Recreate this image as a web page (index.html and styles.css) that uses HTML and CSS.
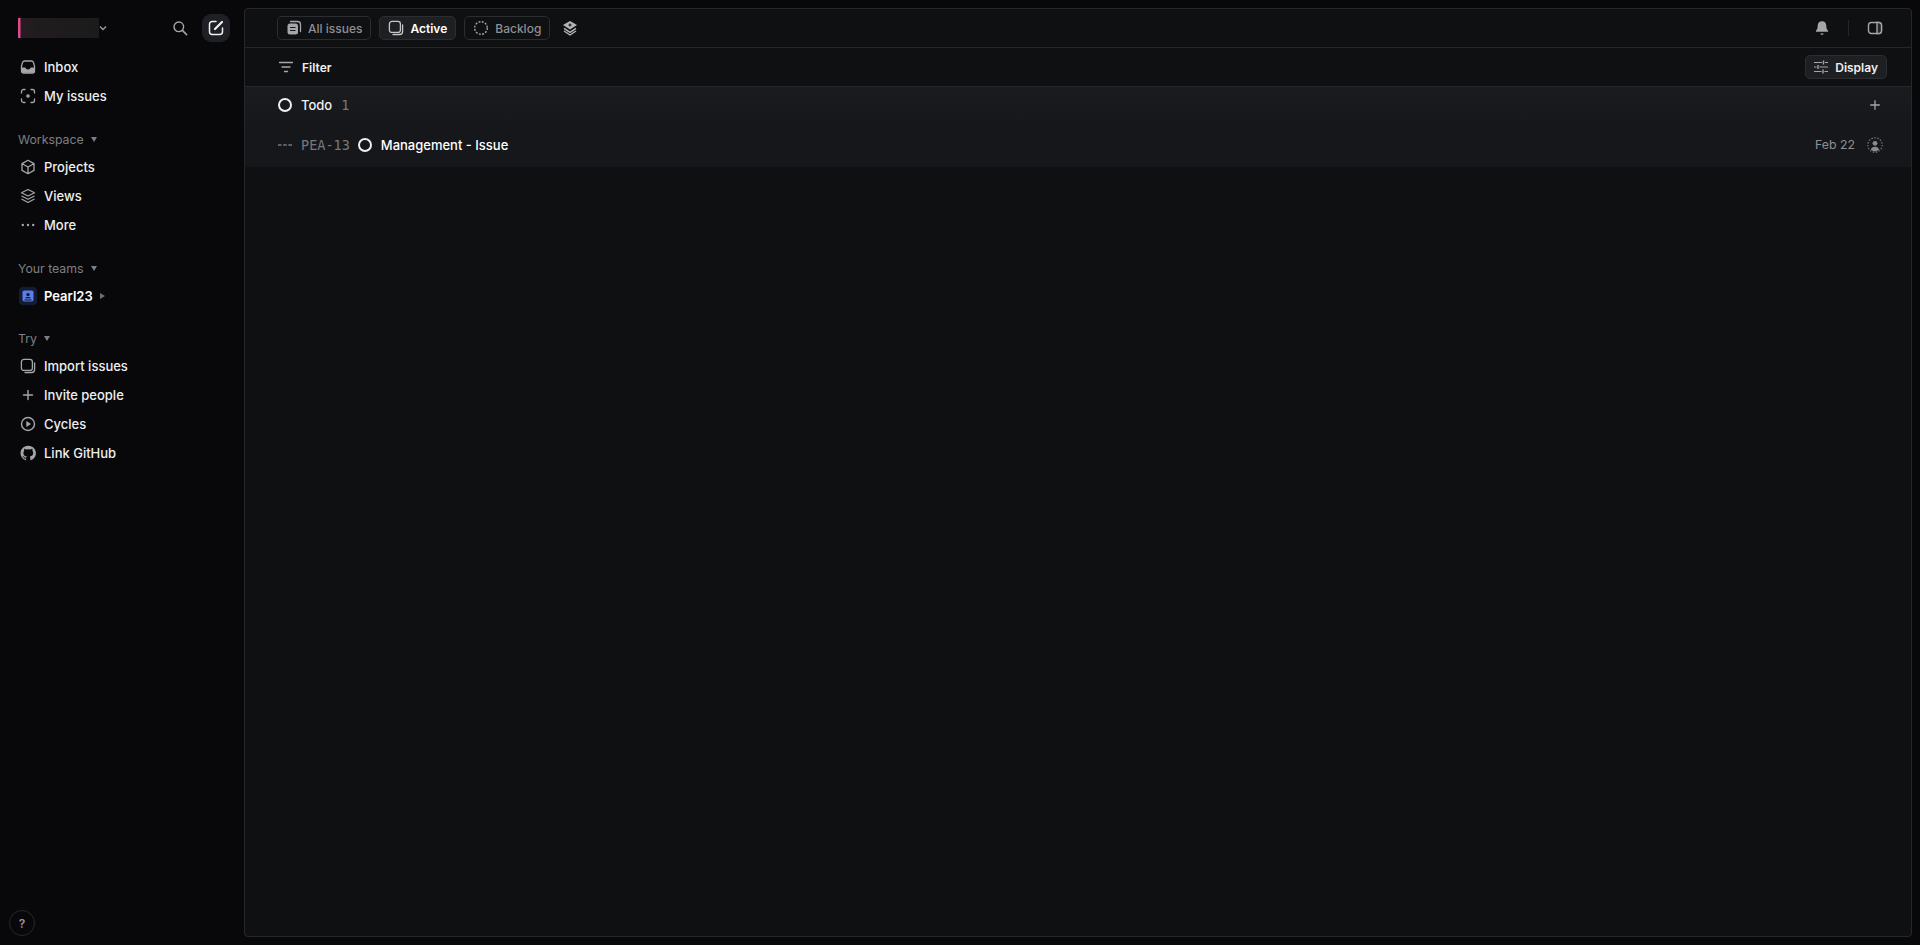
FILE: index.html
```html
<!DOCTYPE html>
<html lang="en">
<head>
    <meta charset="UTF-8">
    <title>Active issues - Pearl23</title>
    <link rel="stylesheet" href="styles.css">
</head>
<body>
    <aside class="sidebar">
        <div class="side-top">
            <div class="workspace">
                <div class="workspace-blur"></div>
                <svg class="chev" width="10" height="10" viewBox="0 0 10 10"><path d="M2 3.500 5 6.500 8 3.500" fill="none" stroke="#9a9b9e" stroke-width="1.400"/></svg>
            </div>
            <button class="icon-btn search-btn">
                <svg width="16" height="16" viewBox="0 0 16 16"><circle cx="6.800" cy="6.800" r="4.800" fill="none" stroke="#a5a6a9" stroke-width="1.400"/><path d="M10.400 10.400 14.600 14.600" stroke="#a5a6a9" stroke-width="1.500" stroke-linecap="round"/></svg>
            </button>
            <button class="icon-btn compose-btn">
                <svg width="16" height="16" viewBox="0 0 16 16"><path d="M8 1.500H4.200A2.700 2.700 0 0 0 1.500 4.200v7.600a2.700 2.700 0 0 0 2.700 2.700h7.600a2.700 2.700 0 0 0 2.700-2.700V8" fill="none" stroke="#f0f0f2" stroke-width="1.500" stroke-linecap="round"/><path d="M7 9 14 2" stroke="#f0f0f2" stroke-width="2.200" stroke-linecap="round"/></svg>
            </button>
        </div>

        <nav class="nav-group">
            <a class="nav-item">
                <svg class="nav-icon" viewBox="0 0 16 16"><path d="M4.600 2h6.800c1 0 1.800.6 2.100 1.500l1 3.500v5c0 1.200-.9 2-2 2H3.500c-1.100 0-2-.8-2-2V7l1-3.500C2.800 2.600 3.600 2 4.600 2Z" fill="none" stroke="#a5a6a9" stroke-width="1.300"/><path d="M1.800 8.500h3.400c.6 1.300 1.500 2 2.800 2s2.200-.7 2.800-2h3.400V12c0 1.100-.8 1.800-1.800 1.800H3.600c-1 0-1.800-.7-1.800-1.800Z" fill="#a5a6a9"/></svg>
                <span>Inbox</span>
            </a>
            <a class="nav-item">
                <svg class="nav-icon" viewBox="0 0 16 16"><path d="M1.500 5V3.500a2 2 0 0 1 2-2H5M11 1.500h1.500a2 2 0 0 1 2 2V5M14.500 11v1.500a2 2 0 0 1-2 2H11M5 14.500H3.500a2 2 0 0 1-2-2V11" fill="none" stroke="#a5a6a9" stroke-width="1.300" stroke-linecap="round"/><circle cx="8" cy="8" r="1.800" fill="#a5a6a9"/></svg>
                <span>My issues</span>
            </a>
        </nav>

        <div class="section-label">Workspace <i class="caret"></i></div>
        <nav class="nav-group">
            <a class="nav-item">
                <svg class="nav-icon" viewBox="0 0 16 16"><path d="M8 1.300 14 4.600v6.800L8 14.700 2 11.400V4.600Z M2.200 4.700 8 8l5.800-3.300M8 8v6.500" fill="none" stroke="#a5a6a9" stroke-width="1.300" stroke-linejoin="round"/></svg>
                <span>Projects</span>
            </a>
            <a class="nav-item">
                <svg class="nav-icon" viewBox="0 0 16 16"><path d="M8 1.500 14.500 4.800 8 8 1.500 4.800Z" fill="none" stroke="#a5a6a9" stroke-width="1.200" stroke-linejoin="round"/><path d="M1.500 8 8 11.300 14.500 8M1.500 11 8 14.500 14.500 11" fill="none" stroke="#a5a6a9" stroke-width="1.200" stroke-linejoin="round"/></svg>
                <span>Views</span>
            </a>
            <a class="nav-item">
                <svg class="nav-icon" viewBox="0 0 16 16"><circle cx="2.800" cy="8" r="1.200" fill="#a5a6a9"/><circle cx="8" cy="8" r="1.200" fill="#a5a6a9"/><circle cx="13.200" cy="8" r="1.200" fill="#a5a6a9"/></svg>
                <span>More</span>
            </a>
        </nav>

        <div class="section-label">Your teams <i class="caret"></i></div>
        <nav class="nav-group">
            <a class="nav-item team-item">
                <span class="team-badge">
                    <svg width="12" height="12" viewBox="0 0 12 12"><rect x=".5" y=".5" width="11" height="11" rx="1.800" fill="#5c7fe6"/><circle cx="6" cy="4.600" r="1.700" fill="#10172e"/><path d="M2.800 8.300c.6-1 1.700-1.400 3.200-1.400s2.600.4 3.200 1.400Z M2.500 9.600h7v.8h-7Z" fill="#10172e"/></svg>
                </span>
                <span class="team-name">Pearl23</span>
                <i class="caret-right"></i>
            </a>
        </nav>

        <div class="section-label try-label">Try <i class="caret"></i></div>
        <nav class="nav-group">
            <a class="nav-item">
                <svg class="nav-icon" viewBox="0 0 16 16"><rect x="1.400" y="1.400" width="11" height="11" rx="2.500" fill="none" stroke="#a5a6a9" stroke-width="1.300"/><path d="M14.600 5v6.500a3 3 0 0 1-3 3H5" fill="none" stroke="#a5a6a9" stroke-width="1.300" stroke-linecap="round"/></svg>
                <span>Import issues</span>
            </a>
            <a class="nav-item">
                <svg class="nav-icon" viewBox="0 0 16 16"><path d="M8 3.500v9M3.500 8h9" stroke="#a5a6a9" stroke-width="1.400" stroke-linecap="round"/></svg>
                <span>Invite people</span>
            </a>
            <a class="nav-item">
                <svg class="nav-icon" viewBox="0 0 16 16"><circle cx="8" cy="8" r="6.500" fill="none" stroke="#a5a6a9" stroke-width="1.400"/><path d="M6.300 5 11 8 6.300 11Z" fill="#a5a6a9"/></svg>
                <span>Cycles</span>
            </a>
            <a class="nav-item">
                <svg class="nav-icon" viewBox="0 0 16 16"><path fill="#a5a6a9" d="M8 .7a7.500 7.500 0 0 0-2.400 14.600c.4.100.5-.2.500-.4v-1.300c-2.100.5-2.500-1-2.500-1-.3-.9-.8-1.100-.8-1.100-.7-.5 0-.5 0-.5.800.1 1.200.8 1.200.8.700 1.200 1.800.8 2.300.6.100-.5.300-.8.500-1-1.700-.2-3.400-.8-3.400-3.700 0-.8.300-1.500.8-2-.1-.2-.3-1 .1-2 0 0 .6-.2 2.100.8a7.200 7.200 0 0 1 3.800 0c1.400-1 2.100-.8 2.100-.8.400 1 .1 1.800.1 2 .5.500.8 1.200.8 2 0 2.900-1.800 3.500-3.400 3.700.3.200.5.700.5 1.400v2.100c0 .2.100.5.500.4A7.500 7.500 0 0 0 8 .7Z"/></svg>
                <span>Link GitHub</span>
            </a>
        </nav>

        <button class="help-btn">?</button>
    </aside>

    <main class="panel">
        <header class="tab-bar">
            <button class="tab">
                <svg width="16" height="16" viewBox="0 0 16 16"><rect x="1.500" y="3.500" width="10.500" height="11" rx="2.500" fill="#a5a6a9"/><path d="M4.500 1.500h7a3 3 0 0 1 3 3v7" fill="none" stroke="#a5a6a9" stroke-width="1.300" stroke-linecap="round"/><path d="M4 7.500h5.500M4 10.500h5.500" stroke="#16171a" stroke-width="1.200"/></svg>
                All issues
            </button>
            <button class="tab active">
                <svg width="16" height="16" viewBox="0 0 16 16"><rect x="1.400" y="1.400" width="11" height="11" rx="2.500" fill="none" stroke="#c4c5c8" stroke-width="1.300"/><path d="M14.600 5v6.500a3 3 0 0 1-3 3H5" fill="none" stroke="#c4c5c8" stroke-width="1.300" stroke-linecap="round"/></svg>
                Active
            </button>
            <button class="tab">
                <svg width="16" height="16" viewBox="0 0 16 16"><circle cx="8" cy="8" r="6.300" fill="none" stroke="#a5a6a9" stroke-width="1.400" stroke-dasharray="1.900 1.400"/></svg>
                Backlog
            </button>
            <button class="layers-btn">
                <svg width="16" height="16" viewBox="0 0 16 16"><path d="M8 1 15 5 8 9.500 1 5Z" fill="#b4b5b8"/><path d="M8 3.400v3.200M6.400 5h3.200" stroke="#16171a" stroke-width="1.200"/><path d="M2 8.300 8 12.300 14 8.300M2 11 8 15 14 11" fill="none" stroke="#b4b5b8" stroke-width="1.400" stroke-linejoin="round"/></svg>
            </button>
            <div class="tab-right">
                <svg width="16" height="16" viewBox="0 0 16 16"><path d="M8 1.200c2.800 0 4.300 2 4.300 4.500 0 2.400.6 3.800 1.700 5.100.3.400.1 1-.5 1h-11c-.6 0-.8-.6-.5-1C3.100 9.500 3.700 8.100 3.700 5.700 3.700 3.200 5.200 1.200 8 1.200Z" fill="#a5a6a9"/><path d="M6.300 13.600h3.400C9.500 14.500 8.900 15 8 15s-1.500-.5-1.700-1.400Z" fill="#a5a6a9"/></svg>
                <span class="tab-sep"></span>
                <svg width="16" height="16" viewBox="0 0 16 16"><rect x="1.500" y="2.500" width="13" height="11" rx="2.800" fill="none" stroke="#a5a6a9" stroke-width="1.400"/><path d="M10 2.500h1.700a2.800 2.800 0 0 1 2.800 2.800v5.400a2.800 2.800 0 0 1-2.800 2.800H10Z" fill="#26272b" stroke="#a5a6a9" stroke-width="1.400"/></svg>
            </div>
        </header>

        <div class="filter-bar">
            <button class="filter-btn">
                <svg width="16" height="16" viewBox="0 0 16 16"><path d="M1.500 3.500h13M4 8h8M6.500 12.500h3" stroke="#a5a6a9" stroke-width="1.300" stroke-linecap="round"/></svg>
                Filter
            </button>
            <button class="display-btn">
                <svg width="16" height="16" viewBox="0 0 16 16"><path d="M1 3.500h8M12 3.500h3M1 8h2.500M6.500 8H15M1 12.500h7.500M11.500 12.500H15" stroke="#a5a6a9" stroke-width="1.200"/><path d="M10.500 1.500v4M5 6v4M10 10.500v4" stroke="#a5a6a9" stroke-width="1.400"/></svg>
                Display
            </button>
        </div>

        <section class="group">
            <div class="group-head">
                <span class="status-ring"></span>
                <span class="group-name">Todo</span>
                <span class="group-count">1</span>
                <svg class="group-add" width="12" height="12" viewBox="0 0 12 12"><path d="M6 1.200v9.600M1.200 6h9.600" stroke="#a5a6a9" stroke-width="1.300"/></svg>
            </div>
            <div class="issue-row">
                <svg class="priority" width="14" height="14" viewBox="0 0 14 14"><path d="M0 7h3.500M5.200 7h3.500M10.400 7H14" stroke="#77787c" stroke-width="1.400"/></svg>
                <span class="issue-id">PEA-13</span>
                <span class="status-ring"></span>
                <span class="issue-title">Management - Issue</span>
                <span class="issue-date">Feb 22</span>
                <svg class="assignee" width="16" height="16" viewBox="0 0 16 16"><circle cx="8" cy="8" r="7.200" fill="none" stroke="#77787c" stroke-width="1.200" stroke-dasharray="1.500 1.500"/><circle cx="8" cy="6.300" r="2.400" fill="#8a8b8f"/><path d="M3.800 12.800c.5-2 2.200-3 4.200-3s3.700 1 4.200 3c-1 .9-2.500 1.500-4.200 1.500s-3.200-.6-4.200-1.500Z" fill="#8a8b8f"/></svg>
            </div>
        </section>
    </main>
</body>
</html>
```

FILE: styles.css
```css
* {
    box-sizing: border-box;
}
html, body {
    height: 100%;
}
body {
    margin: 0;
    display: flex;
    background: #08080a;
    color: #eeeff1;
    font-family: Inter, "Liberation Sans", sans-serif;
    font-size: 13px;
    font-weight: 500;
    overflow: hidden;
}
button {
    font: inherit;
    color: inherit;
    background: none;
    border: 0;
    padding: 0;
}

/* sidebar */
.sidebar {
    width: 244px;
    flex: none;
    display: flex;
    flex-direction: column;
    padding: 14px 14px 0 12px;
    position: relative;
}
.side-top {
    display: flex;
    align-items: center;
    height: 28px;
    margin-bottom: 10px;
}
.workspace {
    display: flex;
    align-items: center;
    margin-left: 6px;
    margin-right: auto;
}
.workspace-blur {
    width: 81px;
    height: 20px;
    background: linear-gradient(90deg, #e0488f 0, #e0488f 2px, #261c22 3px, #201c1e 18px, #1c1b1c 100%);
}
.chev {
    margin-left: -1px;
}
.icon-btn {
    width: 28px;
    height: 28px;
    display: flex;
    align-items: center;
    justify-content: center;
    border-radius: 9px;
}
.search-btn {
    margin-right: 8px;
}
.compose-btn {
    background: #1f2025;
}
.nav-group {
    display: flex;
    flex-direction: column;
}
.nav-item {
    display: flex;
    align-items: center;
    gap: 8px;
    height: 29px;
    padding-left: 8px;
}
.nav-icon {
    width: 16px;
    height: 16px;
    flex: none;
}
.section-label {
    display: flex;
    align-items: center;
    height: 16px;
    margin: 21px 0 5px 6px;
    color: #7e7f83;
    font-size: 12.300px;
    font-weight: 400;
}
.try-label {
    margin-top: 20px;
}
.caret {
    width: 0;
    height: 0;
    margin-left: 7px;
    border-left: 3px solid transparent;
    border-right: 3px solid transparent;
    border-top: 5px solid #7e7f83;
}
.team-item {
    gap: 7px;
    padding-left: 7px;
}
.team-badge {
    width: 18px;
    height: 18px;
    display: flex;
    align-items: center;
    justify-content: center;
    border-radius: 4px;
    background: #141b36;
}
.team-name {
    color: #fff;
    font-weight: 600;
}
.caret-right {
    width: 0;
    height: 0;
    border-top: 3px solid transparent;
    border-bottom: 3px solid transparent;
    border-left: 5px solid #6e6f73;
}
.help-btn {
    position: absolute;
    left: 9px;
    bottom: 9px;
    width: 26px;
    height: 26px;
    border: 1px solid #26272a;
    border-radius: 50%;
    color: #95969a;
    font-size: 12px;
    font-weight: 600;
}

/* main panel */
.panel {
    flex: 1;
    margin: 8px 8px 8px 0;
    border: 1px solid #26272b;
    border-radius: 4px;
    background: #0f1012;
    overflow: hidden;
}
.tab-bar {
    display: flex;
    align-items: center;
    gap: 8px;
    height: 39px;
    padding: 0 28px 0 32px;
    border-bottom: 1px solid #26272b;
}
.tab {
    display: flex;
    align-items: center;
    gap: 6px;
    height: 24px;
    padding: 0 8px;
    border: 1px solid #2c2d31;
    border-radius: 5px;
    color: #8e8f93;
    font-size: 12px;
}
.tab.active {
    background: #1e1f23;
    color: #fff;
    font-weight: 600;
}
.layers-btn {
    display: flex;
    margin-left: 4px;
}
.tab-right {
    display: flex;
    align-items: center;
    margin-left: auto;
}
.tab-sep {
    width: 1px;
    height: 16px;
    margin: 0 18px;
    background: #26272b;
}
.filter-bar {
    display: flex;
    align-items: center;
    justify-content: space-between;
    height: 39px;
    padding: 0 24px 0 33px;
    border-bottom: 1px solid #26272b;
}
.filter-btn {
    display: flex;
    align-items: center;
    gap: 8px;
    font-size: 12px;
    font-weight: 600;
}
.display-btn {
    display: flex;
    align-items: center;
    gap: 6px;
    height: 24px;
    padding: 0 8px 0 7px;
    border: 1px solid #2c2d31;
    border-radius: 5px;
    background: #1e1f23;
    font-size: 12px;
    font-weight: 600;
}
.group {
    background: #16171b;
}
.group-head {
    display: flex;
    align-items: center;
    height: 35px;
    padding: 0 30px 0 33px;
    background: linear-gradient(180deg, #1a1b1f, #17181c);
}
.status-ring {
    width: 14px;
    height: 14px;
    flex: none;
    border: 2px solid #eeeff1;
    border-radius: 50%;
}
.group-name {
    margin-left: 9px;
}
.group-count {
    margin-left: 9px;
    color: #77787c;
    font-family: "DejaVu Sans Mono", monospace;
    font-size: 13.500px;
    font-weight: 400;
}
.group-add {
    margin-left: auto;
}
.issue-row {
    display: flex;
    align-items: center;
    height: 45px;
    padding: 0 28px 0 33px;
    background: #16171b;
}
.issue-id {
    margin: 0 8px 0 9px;
    color: #77787c;
    font-family: "DejaVu Sans Mono", monospace;
    font-size: 13.500px;
    font-weight: 400;
}
.issue-title {
    margin-left: 9px;
    color: #fff;
}
.issue-date {
    margin-left: auto;
    color: #8e8f93;
    font-size: 12.300px;
    font-weight: 400;
}
.assignee {
    margin-left: 12px;
}
```
